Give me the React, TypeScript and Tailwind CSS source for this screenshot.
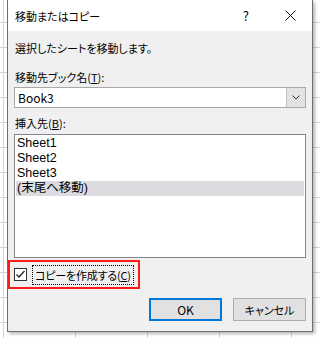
import React from 'react'

const FONT = "font-['Noto_Sans_CJK_JP','Noto_Sans',sans-serif] [font-feature-settings:'palt']"
const LIST_FONT = "font-['Liberation_Sans','Noto_Sans_CJK_JP',sans-serif]"

const SHEETS = ['Sheet1', 'Sheet2', 'Sheet3', '(末尾へ移動)']

function CloseIcon() {
  return (
    <svg width="11" height="11" viewBox="0 0 11 11">
      <path d="M0.5 0.5 L10.5 10.5 M10.5 0.5 L0.5 10.5" stroke="#111" strokeWidth="1" />
    </svg>
  )
}

function Chevron() {
  return (
    <svg width="8" height="5" viewBox="0 0 8 5">
      <path d="M0.5 0.5 L4 4 L7.5 0.5" stroke="#333" strokeWidth="1" fill="none" />
    </svg>
  )
}

function CheckMark() {
  return (
    <svg width="11" height="11" viewBox="0 0 11 11">
      <path d="M1.5 5.5 L4 8 L9.5 2" stroke="#222" strokeWidth="1.3" fill="none" />
    </svg>
  )
}

export default function App() {
  return (
    <div
      className={`${FONT} w-[320px] h-[338px] overflow-hidden flex pl-[7px] bg-white bg-[linear-gradient(to_right,#d4d4d4_1px,transparent_1px),linear-gradient(to_bottom,#d4d4d4_1px,transparent_1px)] bg-size-[72px_25px] bg-position-[3px_22px]`}
    >
      <div className="w-[306px] h-[332px] flex flex-col border-x border-b border-[#6f6f6f] bg-[#f0f0f0] shadow-[2px_2px_3px_rgba(0,0,0,0.28)] text-[11px] leading-[16px] text-black">
        {/* Title bar */}
        <div className="h-[31px] bg-white flex items-center pl-[7px] pr-[16px]">
          <span className="flex-1">移動またはコピー</span>
          <span className="text-[13px] mr-[36px]">?</span>
          <CloseIcon />
        </div>

        {/* Body */}
        <div className="flex flex-col px-[6px] pt-[9px]">
          <p className="pl-px">選択したシートを移動します。</p>

          <p className="pl-px mt-[13px]">
            移動先ブック名(<span className="underline">T</span>):
          </p>
          <div className="mt-[2px] h-[21px] flex border border-[#a8a8a8] bg-white">
            <span className="flex-1 pl-[3px] leading-[19px] text-[12px]">Book3</span>
            <div className="w-[19px] h-full bg-[#e3e3e3] border-l border-[#c4c4c4] flex items-center justify-center">
              <Chevron />
            </div>
          </div>

          <p className="pl-px mt-[7px]">
            挿入先(<span className="underline">B</span>):
          </p>
          <div className={`${LIST_FONT} mt-[3px] h-[124px] border border-[#82868e] bg-white p-px text-[12.5px]`}>
            {SHEETS.map((name, i) => (
              <div
                key={name}
                className={`h-[15px] leading-[15px] pl-px ${i === 3 ? 'bg-[#dcdce0]' : ''}`}
              >
                {name}
              </div>
            ))}
          </div>
        </div>

        {/* Checkbox (highlighted) */}
        <div className="mt-[2px] w-[132px] h-[29px] border-2 border-[#ff1a1a] flex items-center pl-[4px]">
          <div className="w-[13px] h-[13px] shrink-0 border border-[#333] bg-white flex items-center justify-center">
            <CheckMark />
          </div>
          <div className="ml-[5px] h-[20px] px-[2px] shrink-0 whitespace-nowrap flex items-center border border-dotted border-black tracking-[-0.2px]">
            コピーを作成する(<span className="underline">C</span>)
          </div>
        </div>

        {/* Buttons */}
        <div className="mt-[9px] flex justify-end gap-[11px] pr-[6px]">
          <button className="w-[73px] h-[23px] border-2 border-[#0078d7] bg-[#e1e1e1] text-[12px]">OK</button>
          <button className="w-[73px] h-[23px] border border-[#adadad] bg-[#e1e1e1]">キャンセル</button>
        </div>
      </div>
    </div>
  )
}
